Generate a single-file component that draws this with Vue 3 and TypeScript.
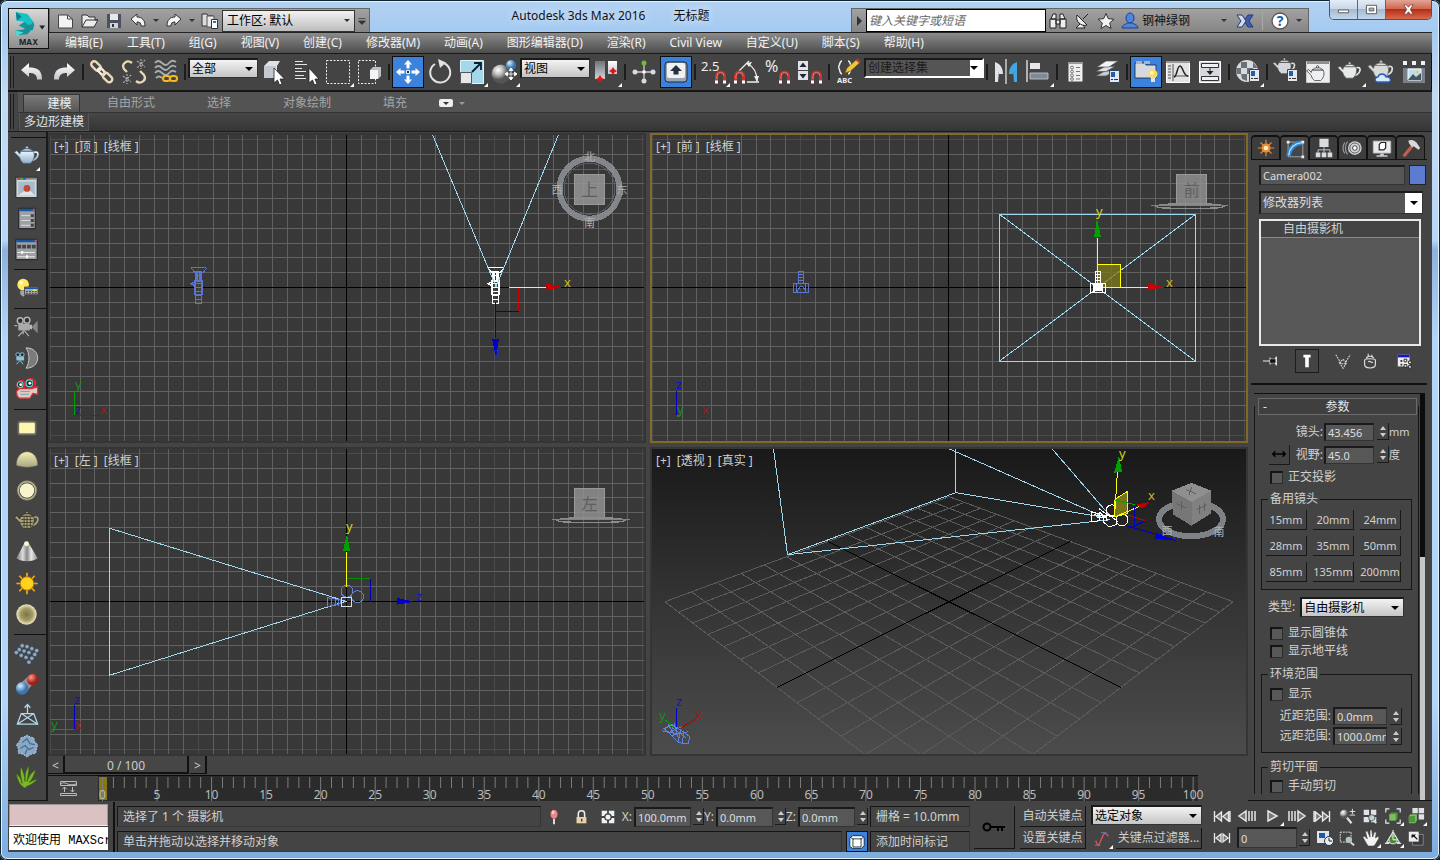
<script setup lang="ts">
import { ref } from 'vue'

type ToolItem = { kind: 'icon' | 'sep' | 'select' | 'combo'; icon?: string; label?: string; active?: boolean; fly?: boolean; options?: string[] }

const teapot = (fill: string, line = '#222'): string =>
  `<g fill="${fill}" stroke="${line}" stroke-width=".8"><path fill="none" stroke="${fill}" stroke-width="1.8" d="M22.500 12c7-3 6 6-1 8"/><path d="M9.500 10.500h13c2 4 1 9-3 12.500h-7c-2-1.500-3.500-3.500-4-6L3 11.500l2.500-1.500L8.500 13.500z"/><path d="M10 10.500c2-3.500 10-3.500 12 0z"/><circle cx="16" cy="6.800" r="1.300"/></g>`
const magnet = (x: number, y: number): string =>
  `<g transform="translate(${x} ${y})"><path d="M1.500 10V5a4 4 0 0 1 8 0v5" fill="none" stroke="#c5352f" stroke-width="3"/><path d="M2 8V5a3.500 3.500 0 0 1 7 0" fill="none" stroke="#ee8a80" stroke-width=".8"/><path d="M0 9.500h3v3H0zM8 9.500h3v3H8z" fill="#fff"/></g>`
const dialog = (x: number, y: number): string =>
  `<g transform="translate(${x} ${y})"><path d="M.5.5h10v12H.5z" fill="#e4e7ee" stroke="#34445e"/><path d="M2 2h4v5H2z" fill="#1d5fa8"/><path d="M2 9.500h2M5 9.500h4" stroke="#333"/></g>`

const icons: Record<string, string> = {
  undo: '<path d="M5 14l8-7v4.500c8 0 13 2 13 12h-5c0-5-3-6.500-8-6.500v4z" fill="url(#silver)"/>',
  redo: '<path d="M27 14l-8-7v4.500c-8 0-13 2-13 12h5c0-5 3-6.500 8-6.500v4z" fill="url(#silver)"/>',
  link: '<g fill="none" stroke="#ead9b5" stroke-width="2.400"><rect x="-5.500" y="-3" width="11" height="6" rx="3" transform="translate(10 10) rotate(45)"/><rect x="-4" y="-2" width="8" height="4" rx="2" transform="translate(15.500 15.500) rotate(45)" stroke="#f5ede0"/><rect x="-5.500" y="-3" width="11" height="6" rx="3" transform="translate(21.500 21.500) rotate(45)"/></g>',
  unlink: '<g fill="none" stroke="#ead9b5" stroke-width="2.300"><path d="M14 7c-5-4-11 1-8 6l3 3M18 25c5 4 11-1 8-6l-4-4"/></g><g stroke="#aaa" stroke-dasharray="2 1" stroke-width="1.200"><path d="M19 5l8 6M27 4l-8 8M23 3v10M5 20l8 6M13 19l-8 8M9 18v10"/></g>',
  bind: '<g fill="none" stroke="#a9adb0" stroke-width="1.800"><path d="M5 7q3-4 7 0t7 0t7-1M5 12q3-4 7 0t7 0t7-1M5 17q3-4 7 0t7 0t7-1"/><path d="M6 22q3-3 6 0"/></g><g fill="none" stroke="#f5b91b" stroke-width="2"><rect x="13" y="20" width="7" height="5" rx="2.500"/><rect x="20" y="20" width="7" height="5" rx="2.500"/></g>',
  pick: '<path d="M6 10l5-5h11l-3 5v12H6z" fill="#dfe2e8"/><path d="M6 10h12v12H6z" fill="#c4c8d0"/><path d="M16 12v15l3.500-3 2 5 2.500-1-2-5h4.500z" fill="#fff" stroke="#222" stroke-width=".8"/>',
  pickList: '<path d="M5 5.500h8M5 8.500h12M5 12.500h7M5 15.500h11M5 19.500h9M5 22.500h11" stroke="#e6e6e6" stroke-width="1.200"/><path d="M19 12v15l3.500-3 2 5 2.500-1-2-5h4z" fill="#fff" stroke="#222" stroke-width=".8"/>',
  region: '<path d="M4.500 4.500h23v23h-23z" fill="none" stroke="#eee" stroke-dasharray="2 1.500"/>',
  windowed: '<path d="M4.500 4.500h17v23h-17z" fill="none" stroke="#eee" stroke-dasharray="2 1.500"/><path d="M16 14l3-3h8v9l-3 3h-8z" fill="#bcc0c8"/><path d="M16 14h8v9h-8z" fill="#f4f4f6"/>',
  move: '<path d="M16 4l4 4.500h-2.500v4h-3v-4H12zM16 28l4-4.500h-2.500v-4h-3v4H12zM4 16l4.500-4v2.500h4v3h-4V20zM28 16l-4.500-4v2.500h-4v3h4V20z" fill="#fff"/><path d="M14.500 14.500h3v3h-3z" fill="#123" stroke="#fff"/>',
  rotate: '<path d="M11 8a10 10 0 1 0 9.500-.5" fill="none" stroke="#e3e3e3" stroke-width="2"/><path d="M14 3l8 3.500-6 5.500z" fill="#e3e3e3"/>',
  scale: '<path d="M4.500 4.500h23v23h-23z" fill="#a5d7ec" stroke="#dff3fa"/><path d="M4.500 16.500h11v11h-11z" fill="#e7e7ea" stroke="#555"/><path d="M16 16l8-8M18 7h7v7" fill="none" stroke="#0b1d29" stroke-width="1.800"/>',
  place: '<circle cx="13" cy="18" r="9.500" fill="url(#ball)"/><circle cx="23" cy="9" r="5" fill="url(#blueBall)"/><path d="M23 12v12M17 18h12M23 12l-2 2.500h4zM23 24l-2-2.500h4zM17 18l2.500-2v4zM29 18l-2.500-2v4z" fill="#fff" stroke="#fff" stroke-width=".8"/>',
  pivot: '<path d="M5 5h10v18H5z" fill="url(#steel)"/><path d="M18 5h9v13h-9z" fill="url(#silver)"/><path d="M10 19l1.500 2.500L14 23l-2.500 1.500L10 27l-1.500-2.500L6 23l2.500-1.500zM23 11l1.500 2.500L27 15l-2.500 1.500L23 19l-1.500-2.500L19 15l2.500-1.500z" fill="#e01616"/>',
  manipulate: '<path d="M16 8v16M7 16h18" stroke="#ccc" stroke-width="1.300"/><circle cx="16" cy="7" r="2.500" fill="#75b93c"/><circle cx="16" cy="25" r="2.500" fill="#d8dce2"/><circle cx="7" cy="16" r="2.500" fill="#d8dce2"/><circle cx="25" cy="16" r="2.500" fill="#d8dce2"/><path d="M14.500 14.500h3v3h-3z" fill="#fff"/>',
  keyboard: '<rect x="5" y="6" width="22" height="20" rx="3" fill="#9aa5b4" stroke="#18283d"/><rect x="7" y="7" width="18" height="15" rx="2" fill="#f1f1f1"/><path d="M16 9l6 6h-3.500v3.500h-5V15H10z" fill="#26313f"/>',
  snap: `<text x="3" y="15" font-size="13" font-family="Noto Sans, sans-serif" fill="#eee">2.5</text>${magnet(17, 15)}`,
  angle: `<path d="M9 15L19 5M17 26h12M18 8c6 3 9 9 9 17" fill="none" stroke="#eee" stroke-width="1.300"/><path d="M16 7l6-1-3 5zM24 20l3 6 2-6z" fill="#eee"/>${magnet(4, 15)}`,
  percent: `<text x="3" y="16" font-size="16" font-family="Noto Sans, sans-serif" fill="#eee">%</text>${magnet(17, 15)}`,
  spinner: `<path d="M4 5h10v9H4zM4 15h10v9H4z" fill="#dfe3ea"/><path d="M5.500 11L9 6.500l3.500 4.500zM5.500 18L9 22.500l3.500-4.500z" fill="#223"/>${magnet(17, 15)}`,
  sets: '<path d="M10 5c-3 0-2 6-4 6 2 0 1 7 4 7M16 5c3 0 2 6 4 6-2 0-1 7-4 7" fill="none" stroke="#eee" stroke-width="1.500"/><path d="M13 17l2-5 9-8 3.500 3-9 8z" fill="#f2c63c" stroke="#7a5a10" stroke-width=".7"/><path d="M24 4l3.500 3 1-1.500-3-3z" fill="#c33"/><text x="5" y="27" font-size="7.500" font-weight="bold" font-family="Noto Sans, sans-serif" fill="#eee">ABC</text>',
  mirror: '<path d="M5 6c6 2 8 7 8 12h-4v-3l-1 11H5z" fill="#dfe2e6"/><path d="M16 3v25" stroke="#eee" stroke-width="1.200"/><path d="M27 6c-6 2-8 7-8 12h4v-3l1 11h3z" fill="#42a6e0"/>',
  align: '<path d="M5 4v22" stroke="#eee" stroke-width="1.300"/><path d="M8 7h10v6H8z" fill="#e6e7ea"/><path d="M8 17h18v6H8z" fill="#7f8896" stroke="#c9ced8" stroke-width=".8"/>',
  layer: '<path d="M8.500 6.500h14v19h-14z" fill="#eee"/><path d="M8 6h15v2H8z" fill="#999"/><g fill="none" stroke="#777"><circle cx="12" cy="11.500" r="1.400"/><circle cx="12" cy="15.500" r="1.400"/><circle cx="12" cy="19.500" r="1.400"/><circle cx="12" cy="23" r="1.400"/><path d="M16 11.500h4M16 15.500h4M16 19.500h4M16 23h4"/></g>',
  layers: `<path d="M4 20l9-5h10l-9 5z" fill="#c8ccd2" stroke="#555" stroke-width=".7"/><path d="M4 15.500l9-5h10l-9 5z" fill="#dde0e5" stroke="#555" stroke-width=".7"/><path d="M5 11l9-6h12l-9 6z" fill="#f3f4f6" stroke="#555" stroke-width=".7"/>${dialog(17, 14)}`,
  ribbon: '<path d="M5 7h10l1 2h10v13H5z" fill="#d5d9df" stroke="#222" stroke-width=".8"/><path d="M6 5h6v3H6zM14 5h6v3h-6z" fill="#acb3bf"/><circle cx="23" cy="18" r="4.500" fill="#ffd85e"/><circle cx="22" cy="17" r="2" fill="#fff6c6"/><path d="M21 22h4v4h-4z" fill="#e2e2e2"/>',
  curves: '<path d="M4.500 5.500h23v21h-23z" fill="#e3e3e3" stroke="#fff"/><path d="M4 5h24v2H4z" fill="#999"/><path d="M6 10h3M6 13h3M6 16h3M6 19h3M6 22h3M11 8v17M11 20h16" stroke="#555"/><path d="M12 21c3 0 3-11 6-11s3 10 8 10" fill="none" stroke="#222" stroke-width="1.500"/>',
  schematic: '<path d="M5.500 5.500h21v21h-21z" fill="#d5d8de" stroke="#fff"/><path d="M7.500 7.500h17v4h-17zM7.500 20.500h17v4h-17z" fill="#eef0f3" stroke="#333"/><path d="M16 12v6" stroke="#222"/><path d="M12.500 15l3.500 4 3.500-4z" fill="#222"/>',
  material: `<circle cx="15" cy="15" r="11" fill="#d7dade"/><path d="M9 6h6v6H9zM15 12h6v6h-6zM21 6l4 5v1h-4zM9 18h6v7l-5-2zM4 12h5v6H4.500z" fill="#6c7178"/>${dialog(17, 13)}`,
  renderSetup: `<g transform="translate(0 -3) scale(.9)">${teapot('#d3d6da', '#444')}</g>${dialog(17, 13)}`,
  renderFrame: `<path d="M4.500 5.500h23v21h-23z" fill="#ecedef" stroke="#ccc"/><path d="M5 5h22v3H5z" fill="#8d9094"/><g transform="translate(2 5) scale(.85)">${teapot('#eff0f1', '#222')}</g>`,
  render: `<g transform="translate(1 1) scale(.92)">${teapot('#e6e8ea', '#555')}</g>`,
  cloud: `<g transform="translate(-1 -1)">${teapot('#dcdad6', '#777')}</g><path d="M11 26c-3-1-2-5 1-5 1-4 7-4 8 0 4-1 6 4 3 5z" fill="#dbe9fb" stroke="#2460c8" stroke-width="1.300"/>`,
  gallery: '<path d="M5 5h4v4H5zM14 5h4v4h-4zM23 5h4v4h-4z" fill="#f1f1f1"/><path d="M5 12h22v15H5z" fill="#78808b"/><path d="M10 13h13v11H10z" fill="#b9def2" stroke="#fff"/><path d="M10 24l5-6 3 3 5-4v7z" fill="#44565b"/><circle cx="19" cy="16" r="1.500" fill="#f7c945"/>',

  potBlue: teapot('url(#bluePot)', '#546b80'),
  frameBuf: '<path d="M4.500 5.500h22v21h-22z" fill="#cfd5db" stroke="#222"/><path d="M5 6h21v2H5z" fill="#888"/><path d="M6 6h3v2H6z" fill="#d33"/><path d="M9 6h3v2H9z" fill="#3a3"/><path d="M12 6h3v2h-3z" fill="#35d"/><path d="M7 10h17v14H7z" fill="#a9bacb"/><path d="M7 24l7-5h5l5 5z" fill="#e2e5e9"/><circle cx="16" cy="17" r="3.500" fill="#bd4a35"/>',
  panelA: '<path d="M7.500 5.500h17v21h-17z" fill="#9da1a6" stroke="#1b1b1b"/><path d="M8 6h16v2.500H8z" fill="#1557a6"/><path d="M10 13h9M10 18h9M10 23h9" stroke="#ddd"/><path d="M20 11.500h3v3h-3zM20 16.500h3v3h-3zM20 21.500h3v3h-3z" fill="#444"/><path d="M22 6h2v2h-2z" fill="#e44"/>',
  panelB: '<path d="M4.500 5.500h22v21h-22z" fill="#9da1a6" stroke="#1b1b1b"/><path d="M5 6h21v2.500H5z" fill="#1557a6"/><path d="M6 11h4v4H6zM11 11h4v4h-4zM16 11h4v4h-4zM21 11h4v4h-4z" fill="#444"/><path d="M6 19h18M6 23.500h18" stroke="#eee"/><path d="M10 17.500h2v3h-2zM15 22h2v3h-2z" fill="#fff"/><path d="M24 6h2v2h-2z" fill="#e44"/>',
  bulb: '<circle cx="12" cy="12" r="6" fill="#ffe95e"/><circle cx="10" cy="10" r="2" fill="#fffbd0"/><path d="M9 18h6v4l-3 2.500L9 22z" fill="#a4a4a4"/><path d="M13.500 14.500h14v8h-14z" fill="#a6abae" stroke="#444"/><path d="M14 15h13v1.500H14z" fill="#1557a6"/><path d="M15 19h11M15 21h11" stroke="#444" stroke-dasharray="2 1"/><path d="M22 17h4v1.500h-4z" fill="#fbe34b"/>',
  camGray: '<g fill="#2e2e2e" stroke="#b4b4b4" stroke-width="1.500"><circle cx="9" cy="9" r="3"/><circle cx="16" cy="8.500" r="3"/></g><path d="M7 12h12v7H7z" fill="#aaa"/><path d="M19 14l2-1v5l-2-1z" fill="#ccc"/><path d="M21 15l6-6v13l-6-6z" fill="#858585"/><path d="M13 19l-6 6M13 19l5 6M12 19v4M6 14l-3 0" stroke="#aaa" stroke-width="1.300"/>',
  camDome: '<path d="M15 5c16 0 16 21 0 21 4-6 4-15 0-21z" fill="#7b7b7b" stroke="#c8c8c8"/><g fill="#1e2a30" stroke="#8ec5dd"><circle cx="6.500" cy="12" r="2"/><circle cx="11" cy="12" r="2"/></g><path d="M5 14h8v4H5z" fill="#8ec5dd"/><path d="M9 18l-4 4M9 18l3 4" stroke="#8ec5dd"/>',
  camStereo: '<g stroke="#e0252b" stroke-width="2.200" fill="#2b2b2b"><circle cx="10" cy="11" r="4"/><circle cx="20" cy="9.500" r="4.500"/></g><g stroke="#58d3d3" stroke-width="1.200" fill="#1d2a2a"><circle cx="9" cy="11" r="3"/><circle cx="18.500" cy="9.500" r="3.500"/></g><g fill="#fff"><circle cx="9.500" cy="11" r="1.500"/><circle cx="19" cy="9.500" r="1.500"/></g><path d="M5 18l3-3h13l6-2v8l-5-1-3 5H8l-2-2z" fill="#e7c6c4" stroke="#c8383b" stroke-width="1.300"/><path d="M9 18h10M9 21h9" stroke="#5fb0b4"/>',
  vrayRect: '<rect x="6" y="8" width="20" height="15" rx="3" fill="#6e6a4d"/><path d="M8.500 10.500h15v10h-15z" fill="#fdf6ad" stroke="#fffde0"/>',
  dome: '<path d="M5 22c0-9 5-14 11-14s11 5 11 14c-6 2.500-16 2.500-22 0z" fill="url(#cream)" stroke="#6e6b55" stroke-width=".6"/>',
  sphere: '<circle cx="16" cy="16" r="10.500" fill="#77745c"/><circle cx="16" cy="16" r="9" fill="#383838" stroke="#bbb694" stroke-width="1.500"/><circle cx="16" cy="16" r="7.500" fill="#f6f4cc"/>',
  mesh: `${teapot('#aaa47e', '#2d2b1f')}<path d="M10 14h12M9 17h13M11 20h10M13 11v11M16 10v13M19.500 11v11" stroke="#36321f" stroke-width=".8"/>`,
  cone: '<path d="M13.500 6h4L27 22c-5 4-17 4-22 0z" fill="url(#coneGrad)"/><circle cx="15.500" cy="7" r="2.500" fill="#fff9cc"/>',
  sun: '<path d="M16 5v22M5 16h22M8 8l16 16M24 8L8 24" stroke="#f0a814" stroke-width="1.800"/><circle cx="16" cy="16" r="7" fill="#ffd21e" stroke="#b67408"/>',
  disc: '<circle cx="15.500" cy="16" r="10.500" fill="url(#discGrad)"/>',
  lattice: '<g fill="#8da9c4" stroke="#2d3d4c" stroke-width=".5"><circle cx="11" cy="8" r="2.200"/><circle cx="16" cy="9" r="2.200"/><circle cx="21" cy="11" r="2.200"/><circle cx="26" cy="13" r="2.200"/><circle cx="8" cy="12" r="2.200"/><circle cx="13" cy="13.500" r="2.200"/><circle cx="18" cy="15" r="2.200"/><circle cx="24" cy="17" r="2.200"/><circle cx="5" cy="15" r="2.200"/><circle cx="10" cy="18" r="2.200"/><circle cx="15" cy="20" r="2.200"/><circle cx="21" cy="21" r="2.200"/><circle cx="18" cy="25" r="2.200"/></g>',
  blobs: '<path d="M9 15l9-8 6 6-8 10z" fill="#9b8b9c"/><circle cx="11" cy="20" r="6.500" fill="url(#blueBall)"/><circle cx="22" cy="11" r="6" fill="url(#redBall)"/>',
  pyramid: '<path d="M10 14h13l4 11H6zM10 14l17 11M23 14L6 25M16.500 14V5M13.500 8l3-3.500 3 3.500" fill="none" stroke="#b4d9ec" stroke-width="1.300"/>',
  rock: '<path d="M10 7l3-1 3-2 3 2 4 1 1 4 3 3-1 4-1 5-5 1-4 3-4-3-5-1v-5l-2-4 3-3z" fill="#89a9c9" stroke="#c2d5e8" stroke-dasharray="1.500 1.500"/><path d="M11 12l5-4 3 5 5 1M9 18l5-3 4 4 5-2M14 24l2-5" stroke="#4a6a8c" fill="none" stroke-width="1.300"/>',
  grass: '<path d="M14 27C8 24 6 18 5 12c4 3 5 6 6 10-1-6-3-12-1-17 2 5 4 10 4 15 0-6 0-11 4-16 0 6-1 11-2 16 2-5 4-9 9-12-2 6-4 11-7 13 3-1 5-3 9-3-4 3-7 6-11 7z" fill="#7db52c" stroke="#38600f" stroke-width=".7"/>',
}

const tab: Record<string, string> = {
  create: '<path d="M12 3v18M3 12h18M6 6l12 12M18 6L6 18" stroke="#e2863a" stroke-width="1.300"/><circle cx="12" cy="12" r="5" fill="#f08a2c"/><circle cx="12" cy="12" r="2.500" fill="#fff6c8"/>',
  modify: '<path d="M4.500 4.500h16v16h-16z" fill="none" stroke="#aaa"/><path d="M5 20C6 11 11 6 20 5" fill="none" stroke="#2f89d4" stroke-width="5"/><path d="M5 19C6 11 11 6 19 5" fill="none" stroke="#b9defa" stroke-width="1.400"/><path d="M3 3h3v3H3zM19 3h3v3h-3zM19 19h3v3h-3z" fill="#eee"/>',
  hierarchy: '<path d="M7 2h10v9H7zM3 17h5v5H3zM9.500 17h5v5h-5zM16 17h5v5h-5z" fill="#d8dbe0"/><path d="M12 11v6M5.500 17v-3h13v3" fill="none" stroke="#ccc"/>',
  motion: '<circle cx="14" cy="12" r="7.500" fill="#d2d5d9"/><circle cx="14" cy="12" r="5.500" fill="none" stroke="#555"/><circle cx="14" cy="12" r="2.500" fill="#fff" stroke="#333"/><path d="M6 5c-3 4-3 10 0 14M3 6c-2.500 4-2.500 8 0 12" fill="none" stroke="#999" stroke-width="1.300"/>',
  display: '<path d="M2.500 4.500h19v13h-19z" fill="#e8e9ec" stroke="#bbb"/><path d="M9 8l2-2h5v6l-2 2H9z" fill="#fff" stroke="#222" stroke-width="1.300"/><path d="M10 18h4v2h4v1.500H6V20h4z" fill="#ccc"/>',
  utilities: '<path d="M4 21L14 9" stroke="#c05f4e" stroke-width="3.500"/><path d="M9 4c4-2 7 0 9 2l4 6-2 2-5-4-2 1-3-4z" fill="#d5d8dc"/>',
}

const small: Record<string, string> = {
  pin: '<path d="M1 10h8M9 6v8M15 6v8M9 8h6M9 12h6M9 10h6M16 5v10" stroke="#e8e8e8" stroke-width="1.200"/><path d="M9 8h6v4H9z" fill="#111"/>',
  showEnd: '<path d="M6 3h8v3h-2v11H8V6H6z" fill="#fff"/>',
  unique: '<path d="M2 3l6 10h4l6-10M6 12l4 6 4-6-4-4z" fill="none" stroke="#ddd" stroke-width="1.200" stroke-dasharray="2 1"/>',
  remove: '<path d="M4 9c0-2 12-2 12 0v5c0 5-12 5-12 0zM6 7c1-3 7-3 8 0M8 5V2M12 5V3M8 11c2-2 4 2 5 0" fill="none" stroke="#ddd" stroke-width="1.300"/>',
  config: '<path d="M2 3h13v13H2z" fill="#eee"/><path d="M2 3h13v3H2z" fill="#1616d0"/><path d="M5 9h2v2H5zM5 13h2v2H5z" fill="#333"/><path d="M9 8h3v3H9zM14 10h3v3h-3zM9 14h3v3H9zM14 15h3v3h-3z" fill="#e8e8e8" stroke="#222"/>',
  bulbPin: '<ellipse cx="10" cy="7" rx="4.500" ry="5.500" fill="#e2888e" stroke="#5e2b2f"/><ellipse cx="9" cy="5" rx="1.500" ry="2" fill="#ffd0cc"/><path d="M9 12h2v6H9z" fill="#eee"/>',
  lock: '<path d="M7 10V6c0-4 7-4 7 0v4" fill="none" stroke="#eee" stroke-width="1.700"/><path d="M5 10h11v7H5z" fill="#e7d2a7"/><path d="M10 12h1.500v3H10z" fill="#333"/>',
  absolute: '<path d="M3 3h6v6H3zM11 3h6v6h-6zM3 11h6v6H3zM11 11h6v6h-6z" fill="#eef1f5"/><circle cx="10" cy="10" r="3.500" fill="#eef1f5" stroke="#333" stroke-width="1.300"/>',
  cube: '<path d="M5 3h10l3 2v9l-3 3H5l-3-2V6z" fill="#fff" stroke="#123"/><path d="M5.500 6.500h9v9h-9z" fill="none" stroke="#234"/><path d="M3 5l3 2M17 5l-3 2" stroke="#234"/>',
  key: '<circle cx="6" cy="10" r="3.500" fill="none" stroke="#000" stroke-width="2"/><path d="M9 9h15v2h-2v3h-2v-3h-2v3h-2v-3H9z" fill="#000"/>',
  curve: '<path d="M3 12c3 8 4 4 6-1s4-11 8-4" fill="none" stroke="#e05252" stroke-width="1.500"/><path d="M9 3h6M2 17h6" stroke="#6884d8"/>',
  first: '<path d="M2.500 5v11M9.500 6L4 10.500 9.500 15zM16.500 6L11 10.500l5.500 4.500zM18 5v11" fill="#777" stroke="#e6e6e6" stroke-width="1.400"/>',
  prev: '<path d="M9 5L2 10l7 5zM12 5v10M15 5v10M18 5v10" fill="#777" stroke="#e6e6e6" stroke-width="1.500"/>',
  play: '<path d="M6 5l9 5-9 5z" fill="#777" stroke="#e6e6e6" stroke-width="1.500"/>',
  next: '<path d="M11 5l7 5-7 5zM8 5v10M5 5v10M2 5v10" fill="#777" stroke="#e6e6e6" stroke-width="1.500"/>',
  last: '<path d="M17.500 5v11M10.500 6l5.500 4.500L10.500 15zM3.500 6L9 10.500 3.500 15zM2 5v11" fill="#777" stroke="#e6e6e6" stroke-width="1.400"/>',
  keyMode: '<path d="M2.500 5v10M17.500 5v10M9 6l-5 4 5 4zM11 6l5 4-5 4z" fill="#777" stroke="#e6e6e6" stroke-width="1.300"/>',
  zoom: '<circle cx="7" cy="8" r="5" fill="url(#ball)"/><path d="M10 12l5 6" stroke="#ddd" stroke-width="2.500"/><path d="M13 5h6M16 2v6M13 9h6" stroke="#eee"/>',
  zoomAll: '<path d="M3 3h6v6H3zM11 3h6v6h-6zM3 11h6v6H3zM11 11h6v6h-6z" fill="#dfe2e6"/><circle cx="12" cy="12" r="3.500" fill="#bcd0da" stroke="#555"/><path d="M14 15l3 3" stroke="#ddd" stroke-width="2"/>',
  extents: '<path d="M2 6V2h4M14 2h4v4M2 14v4h4M14 18h4v-4" fill="none" stroke="#eee" stroke-width="1.300"/><path d="M6 8l2-2h7v7l-2 2H6z" fill="#4f963d"/><path d="M6 8h7v7H6z" fill="#7dbc62"/>',
  extentsAll: '<path d="M6 1h6v6H6zM13 1h6v6h-6zM13 8h6v6h-6z" fill="#dfe2e6"/><path d="M2 10l2-2h7v7l-2 3H2z" fill="#7dbc62"/><path d="M2 10h7v7H2z" fill="#4f963d"/>',
  timeCfg: '<path d="M2 3h12v12H2z" fill="#dfe3ea"/><path d="M4 5h6v5H4z" fill="#1a5ca8"/><circle cx="14" cy="13" r="4.500" fill="#eee" stroke="#234"/><path d="M14 10v3h3" fill="none" stroke="#222"/>',
  zoomRegion: '<path d="M2.500 3.500h12v11h-12z" fill="none" stroke="#eee" stroke-dasharray="2 1"/><circle cx="12" cy="12" r="3.500" fill="#b3c5bd"/><path d="M14 15l4 3" stroke="#ddd" stroke-width="2"/>',
  pan: '<path d="M6 16L2 9l2-1 3 3-2-8 2-1 3 7V1l2 0 1 8 2-6 2 1-1 6 3-2 1 2-4 7-2 2H8z" fill="#f3f3f3" stroke="#444" stroke-width=".7"/>',
  orbit: '<path d="M10 3L3 15h14zM10 1v6M1 16h5M14 16h5" fill="none" stroke="#ddd" stroke-width="1.300"/><circle cx="10" cy="12" r="4.500" fill="#4b8b35" stroke="#eee"/><path d="M10 8v4h4" fill="none" stroke="#fff"/>',
  maximize: '<path d="M6 6h12v12H6z" fill="#3a3a3a" stroke="#889"/><path d="M2 3h11v11H2z" fill="#eee"/><path d="M5 6h5L8.500 7.500 12 11l-1 1-3.500-3.500L5 10z" fill="#111"/>',
}

const quick: Record<string, string> = {
  file: '<path d="M2.500 4h9l5 4v9h-14z" fill="#f3f3f3" stroke="#444"/><path d="M11.500 4v4h5" fill="none" stroke="#444"/>',
  open: '<path d="M2 16V4h5l2 2h6v3h3l-4 7z" fill="#ececec" stroke="#333"/><path d="M2 16l4-7h12" fill="none" stroke="#333"/>',
  save: '<path d="M3 3h14v14H3z" fill="#4a5060"/><path d="M6 3h8v6H6z" fill="#e6e8ec"/><path d="M6 12h8v5H6z" fill="#cfd3da"/><path d="M8 13h2v3H8z" fill="#333"/>',
  undo: '<path d="M3 8l6-5v3c5 0 8 3 8 9h-4c0-3-1-4-4-4v3z" fill="#f4f4f4" stroke="#333"/>',
  redo: '<path d="M17 8l-6-5v3c-5 0-8 3-8 9h4c0-3 1-4 4-4v3z" fill="#f4f4f4" stroke="#333"/>',
  project: '<path d="M2 3h5l1 2h5v10H2z" fill="#ddd" stroke="#333"/><path d="M7 5h7v11H7z" fill="#e9e9e9" stroke="#555"/><path d="M11.500 8.500h6v9h-6z" fill="#fff" stroke="#333"/><path d="M13 10h3v2h-3z" fill="#27c"/>',
  find: '<path d="M3 8l2-5h3v5zM12 8V3h3l2 5zM2 8h6v9H2zM12 8h6v9h-6zM8 9h4v4H8z" fill="#eee" stroke="#222"/>',
  dish: '<path d="M5 4c-2 6 4 12 10 10zM11 8l5-5M8 13l-4 4h9l-2-3" fill="#eee" stroke="#222"/>',
  star: '<path d="M10 2.500l2.300 5.200 5.700.5-4.300 3.700 1.300 5.600-5-3-5 3 1.300-5.600L2 8.200l5.700-.5z" fill="#f2f2f2" stroke="#333"/>',
  user: '<ellipse cx="10" cy="7" rx="4" ry="5" fill="#4e86dd" stroke="#1c3f8c"/><path d="M2 17c0-3 4-4 6-5h4c2 1 6 2 6 5z" fill="#4e86dd" stroke="#1c3f8c"/>',
  exchange: '<path d="M18 4h-5L9 10l4 6h5l-4-6z" fill="#3f5fae" stroke="#223a7a"/><path d="M2 4h5l4 6-4 6H2l4-6z" fill="#d6dbe8" stroke="#223a7a"/>',
  help: '<circle cx="10" cy="10" r="8" fill="#fff" stroke="#555" stroke-width="1.300"/><text x="10" y="15" text-anchor="middle" font-size="14" font-weight="bold" font-family="Noto Sans, sans-serif" fill="#1b5da9">?</text>',
}

const tools: ToolItem[] = [
  { kind: 'icon', icon: 'undo', label: '撤消' }, { kind: 'icon', icon: 'redo', label: '重做' }, { kind: 'sep' },
  { kind: 'icon', icon: 'link', label: '选择并链接' }, { kind: 'icon', icon: 'unlink', label: '断开链接' }, { kind: 'icon', icon: 'bind', label: '绑定到空间扭曲' }, { kind: 'sep' },
  { kind: 'select', label: '选择过滤器', options: ['全部'] },
  { kind: 'icon', icon: 'pick', label: '选择对象' }, { kind: 'icon', icon: 'pickList', label: '按名称选择' }, { kind: 'icon', icon: 'region', label: '选择区域', fly: true }, { kind: 'icon', icon: 'windowed', label: '窗口/交叉' }, { kind: 'sep' },
  { kind: 'icon', icon: 'move', label: '选择并移动', active: true }, { kind: 'icon', icon: 'rotate', label: '选择并旋转' }, { kind: 'icon', icon: 'scale', label: '选择并缩放', fly: true }, { kind: 'icon', icon: 'place', label: '选择并放置', fly: true },
  { kind: 'select', label: '参考坐标系', options: ['视图'] },
  { kind: 'icon', icon: 'pivot', label: '使用轴点中心', fly: true }, { kind: 'sep' },
  { kind: 'icon', icon: 'manipulate', label: '选择并操纵' }, { kind: 'icon', icon: 'keyboard', label: '键盘快捷键覆盖', active: true }, { kind: 'sep' },
  { kind: 'icon', icon: 'snap', label: '捕捉开关', fly: true }, { kind: 'icon', icon: 'angle', label: '角度捕捉' }, { kind: 'icon', icon: 'percent', label: '百分比捕捉' }, { kind: 'icon', icon: 'spinner', label: '微调器捕捉' }, { kind: 'sep' },
  { kind: 'icon', icon: 'sets', label: '编辑命名选择集' }, { kind: 'combo', label: '命名选择集', options: ['创建选择集'] }, { kind: 'sep' },
  { kind: 'icon', icon: 'mirror', label: '镜像' }, { kind: 'icon', icon: 'align', label: '对齐', fly: true }, { kind: 'sep' },
  { kind: 'icon', icon: 'layer', label: '场景资源管理器' }, { kind: 'icon', icon: 'layers', label: '层资源管理器' }, { kind: 'sep' },
  { kind: 'icon', icon: 'ribbon', label: '切换功能区', active: true }, { kind: 'icon', icon: 'curves', label: '曲线编辑器' }, { kind: 'icon', icon: 'schematic', label: '图解视图' }, { kind: 'sep' },
  { kind: 'icon', icon: 'material', label: '材质编辑器', fly: true }, { kind: 'sep' },
  { kind: 'icon', icon: 'renderSetup', label: '渲染设置' }, { kind: 'icon', icon: 'renderFrame', label: '渲染帧窗口' }, { kind: 'icon', icon: 'render', label: '渲染产品', fly: true }, { kind: 'icon', icon: 'cloud', label: '云渲染' }, { kind: 'icon', icon: 'gallery', label: '渲染库' },
]

const sideGroups: string[][] = [
  ['potBlue', 'frameBuf', 'panelA', 'panelB'], ['bulb'], ['camGray', 'camDome', 'camStereo'],
  ['vrayRect', 'dome', 'sphere', 'mesh', 'cone', 'sun', 'disc'], ['lattice', 'blobs', 'pyramid', 'rock', 'grass'],
]
const menus = ['编辑(E)', '工具(T)', '组(G)', '视图(V)', '创建(C)', '修改器(M)', '动画(A)', '图形编辑器(D)', '渲染(R)', 'Civil View', '自定义(U)', '脚本(S)', '帮助(H)']
const ribbonTabs = ['建模', '自由形式', '选择', '对象绘制', '填充']
const lensSizes = ['15mm', '20mm', '24mm', '28mm', '35mm', '50mm', '85mm', '135mm', '200mm']
const modButtons = ['pin', 'showEnd', 'unique', 'remove', 'config']

const CELL = 14.8
type Line = { x1: number; y1: number; x2: number; y2: number; tone: string }
function flatGrid(left: number, top: number, cx: number, cy: number): Line[] {
  const out: Line[] = []
  for (let k = -21; k <= 21; k++) {
    if (k === 0) continue
    const tone = k % 10 === 0 ? 'dim' : 'lit'
    const x = Math.round(cx + k * CELL) + 0.5
    const y = Math.round(cy + k * CELL) + 0.5
    out.push({ x1: x, y1: top, x2: x, y2: top + 306, tone })
    if (Math.abs(k) <= 10) out.push({ x1: left, y1: y, x2: left + 594, y2: y, tone })
  }
  out.sort((a, b) => a.tone.localeCompare(b.tone))
  out.push({ x1: cx + 0.5, y1: top, x2: cx + 0.5, y2: top + 306, tone: 'axis' })
  out.push({ x1: left, y1: cy + 0.5, x2: left + 594, y2: cy + 0.5, tone: 'axis' })
  return out
}
const topGrid = flatGrid(50, 135, 346, 287)
const frontGrid = flatGrid(652, 135, 948, 287)
const leftGrid = flatGrid(50, 449, 346, 601)

function project(u: number, v: number): [number, number] {
  const t = u + v
  const w = 1 + 0.0248 * t
  return [949 + (20.3 * (u - v)) / w, (602 + 4.82 * t) / w]
}
const floorLines: Line[] = []
for (const k of [-7, -6, -5, -4, -3, -2, -1, 1, 2, 3, 4, 5, 6, 7, 0]) {
  for (const [a, b] of [[project(k, -7), project(k, 7)], [project(-7, k), project(7, k)]]) {
    floorLines.push({ x1: a[0], y1: a[1], x2: b[0], y2: b[1], tone: k === 0 ? 'axis' : 'floor' })
  }
}

const frames = Array.from({ length: 101 }, (_, i) => i)
const framePos = (f: number): string => `${0.41 + f * 0.9915}%`

const objectName = ref('Camera002')
const lens = ref('43.456')
const fov = ref('45.0')
const near = ref('0.0mm')
const far = ref('1000.0mm')
const coords = ref([{ axis: 'X', value: '100.0mm' }, { axis: 'Y', value: '0.0mm' }, { axis: 'Z', value: '0.0mm' }])
const frame = ref('0')
const ortho = ref(false)
const showCone = ref(false)
const showHorizon = ref(false)
const showEnv = ref(false)
const clip = ref(false)
</script>

<template>
  <div class="window">
    <svg class="defs" aria-hidden="true">
      <defs>
        <linearGradient id="silver" x2="0" y2="1"><stop offset="0" stop-color="#fff" /><stop offset="1" stop-color="#c3c6cb" /></linearGradient>
        <linearGradient id="steel" x2="0" y2="1"><stop offset="0" stop-color="#70747c" /><stop offset="1" stop-color="#d0d3da" /></linearGradient>
        <linearGradient id="bluePot" x2="0" y2="1"><stop offset="0" stop-color="#f1f8ff" /><stop offset="1" stop-color="#8fb0cc" /></linearGradient>
        <linearGradient id="cream" x2="0" y2="1"><stop offset="0" stop-color="#f3f0b4" /><stop offset="1" stop-color="#a9a682" /></linearGradient>
        <linearGradient id="coneGrad"><stop offset="0" stop-color="#777" /><stop offset=".3" stop-color="#ddd" /><stop offset=".5" stop-color="#888" /><stop offset=".7" stop-color="#e8e8e8" /><stop offset="1" stop-color="#888" /></linearGradient>
        <radialGradient id="discGrad"><stop offset="0" stop-color="#7b7442" /><stop offset=".6" stop-color="#a49c68" /><stop offset="1" stop-color="#efe9bd" /></radialGradient>
        <radialGradient id="ball" cx=".35" cy=".3"><stop offset="0" stop-color="#fff" /><stop offset=".5" stop-color="#bbb" /><stop offset="1" stop-color="#555" /></radialGradient>
        <radialGradient id="blueBall" cx=".35" cy=".3"><stop offset="0" stop-color="#d7ecff" /><stop offset="1" stop-color="#3b75ad" /></radialGradient>
        <radialGradient id="redBall" cx=".35" cy=".3"><stop offset="0" stop-color="#ff9c8a" /><stop offset="1" stop-color="#9e2119" /></radialGradient>
        <linearGradient id="sky" x2="0" y2="1"><stop offset="0" stop-color="#191919" /><stop offset=".5" stop-color="#343434" /><stop offset="1" stop-color="#4c4c4c" /></linearGradient>
      </defs>
    </svg>

    <header class="titlebar">
      <button class="app-btn" aria-label="应用程序菜单">
        <svg viewBox="0 0 40 40" width="39" height="39">
          <path d="M7 3l12 2 6 8-4 4-5-4-8-1z" fill="#19c3c3" /><path d="M7 3l6 5-5 4z" fill="#0b8288" />
          <path d="M16 13l5 4 4-4 1 4-2 5-8-2-6-3z" fill="#0c9aa0" /><path d="M7 27l12-1 6-7-4-3-6 5-8 1z" fill="#149297" /><path d="M7 22l8 2-8 4z" fill="#4fd8d6" />
          <path d="M31 17h6l-3 4z" fill="#222" />
          <text x="20" y="37" text-anchor="middle" font-size="8" font-weight="bold" font-family="Inter, sans-serif" fill="#222">MAX</text>
        </svg>
      </button>
      <div class="quickbar">
        <button v-for="q in ['file', 'open', 'save']" :key="q" :aria-label="q"><svg viewBox="0 0 20 20" v-html="quick[q]" /></button>
        <button aria-label="撤消"><svg viewBox="0 0 20 20" v-html="quick.undo" /></button><i class="tri" />
        <button aria-label="重做"><svg viewBox="0 0 20 20" v-html="quick.redo" /></button><i class="tri" />
        <button aria-label="项目"><svg viewBox="0 0 20 20" v-html="quick.project" /></button>
        <span class="workspace"><select aria-label="工作区"><option>工作区: 默认</option></select></span>
        <button class="more" aria-label="自定义"><svg viewBox="0 0 20 20"><path d="M5 6.500h10M5 10h10l-5 5z" fill="#333" stroke="#333" /></svg></button>
      </div>
      <h1 class="title"><span>Autodesk 3ds Max 2016</span><span>无标题</span></h1>
      <div class="info">
        <button class="collapse" aria-label="折叠"><i class="tri-right" /></button>
        <input class="search" aria-label="搜索" placeholder="键入关键字或短语">
        <button v-for="q in ['find', 'dish', 'star', 'user']" :key="q" :aria-label="q"><svg viewBox="0 0 20 20" v-html="quick[q]" /></button>
        <span class="account">钢神绿钢</span><i class="tri" />
        <button aria-label="Exchange"><svg viewBox="0 0 20 20" v-html="quick.exchange" /></button>
        <i class="info-sep" />
        <button aria-label="帮助"><svg viewBox="0 0 20 20" v-html="quick.help" /></button><i class="tri" />
      </div>
      <div class="winbtns">
        <button aria-label="最小化"><svg viewBox="0 0 14 14"><path d="M1.500 7.500h11v3h-11z" fill="#fff" stroke="#555" /></svg></button>
        <button aria-label="最大化"><svg viewBox="0 0 14 14"><path d="M1.500 2.500h11v9h-11zM4.500 5.500h5v3h-5z" fill="#fff" fill-rule="evenodd" stroke="#555" /></svg></button>
        <button class="close" aria-label="关闭"><svg viewBox="0 0 14 14"><path d="M2 2h3l2 2.500L9 2h3L9 7l3 5H9L7 9.500 5 12H2l3-5z" fill="#fff" stroke="#633" stroke-width=".8" /></svg></button>
      </div>
    </header>

    <div class="client">
      <nav class="menubar"><button v-for="m in menus" :key="m">{{ m }}</button></nav>

      <div class="toolbar">
        <i class="grip" />
        <template v-for="(t, i) in tools" :key="i">
          <button v-if="t.kind === 'icon'" class="tool" :class="{ active: t.active, fly: t.fly }" :aria-label="t.label"><svg viewBox="0 0 32 32" v-html="icons[t.icon!]" /></button>
          <i v-else-if="t.kind === 'sep'" class="sep" />
          <span v-else class="drop" :class="t.kind"><select :aria-label="t.label"><option v-for="o in t.options" :key="o">{{ o }}</option></select></span>
        </template>
      </div>

      <div class="ribbon">
        <i class="grip" />
        <div class="ribbon-body">
          <div class="ribbon-tabs">
            <button v-for="(r, i) in ribbonTabs" :key="r" :class="{ on: i === 0 }">{{ r }}</button>
            <button class="mini" aria-label="最小化功能区"><i class="tri" /></button><i class="tri pale" />
          </div>
          <div class="ribbon-panel"><button>多边形建模</button></div>
        </div>
      </div>

      <main class="work">
        <aside class="side">
          <div v-for="(g, gi) in sideGroups" :key="gi" class="side-group">
            <button v-for="s in g" :key="s" :aria-label="s" :class="{ fly: s === 'potBlue' }"><svg viewBox="0 0 32 32" v-html="icons[s]" /></button>
          </div>
        </aside>

        <section class="center">
          <div class="views">
            <div class="view">
              <svg viewBox="50 135 594 306" preserveAspectRatio="xMidYMid slice">
                <line v-for="(l, i) in topGrid" :key="i" :x1="l.x1" :y1="l.y1" :x2="l.x2" :y2="l.y2" :class="l.tone" />
                <g v-for="c in [{ x: 198, s: '#5876cf' }, { x: 495, s: '#fff' }]" :key="c.x" :transform="`translate(${c.x} 0)`" :stroke="c.s" fill="none">
                  <path d="M-7 267.500h15M-7 268l4 5h8l4-5M-2.500 272v32h6v-32zM-4 280.500h8v14h-8zM-3 276h6M-3 284h7M-3 288h7M-3 292h7M-3 296h7M-3 300h7M-7 284l4-2v4z" />
                  <path d="M-1 272v9h3v-9" stroke-width="2" />
                </g>
                <path class="cone-line" d="M432.500 135L496 287M558.500 135L496 287" />
                <path d="M509 287.500h38" stroke="#ff0" /><path d="M546 283.500v7l16-3z" fill="#c40000" />
                <path d="M518.500 288v23" stroke="#c00" /><path d="M495.500 302v36M496 311.500h23" stroke="#0000b0" fill="none" /><path d="M492 339h7l-3 19z" fill="#0000c8" />
                <text x="564" y="287" class="ax" fill="#c8b81c">x</text><text x="494" y="357" class="ax" fill="#2030b0">z</text>
                <path d="M74.500 391v24" stroke="#00a000" /><path d="M75 415.500h25" stroke="#b00000" />
                <text x="75" y="389" class="ax" fill="#169016">y</text><text x="75" y="414" class="ax" fill="#1010c8">z</text><text x="100" y="414" class="ax" fill="#a01818">x</text>
                <g opacity=".85"><circle cx="589.500" cy="189" r="30" fill="none" stroke="#90949a" stroke-width="6" /><circle cx="589.500" cy="189" r="25.500" fill="none" stroke="#606266" />
                  <path d="M574.500 174.500h30v30h-30z" fill="#969696" stroke="#aaa" /><text x="589.500" y="196" text-anchor="middle" font-size="17" fill="#666">上</text></g>
                <g class="compass"><text x="589.500" y="161">北</text><text x="589.500" y="227">南</text><text x="557" y="194">西</text><text x="622" y="194">东</text></g>
              </svg>
              <div class="vlabel"><button>[+]</button><button>[顶 ]</button><button>[线框 ]</button></div>
            </div>

            <div class="view current">
              <svg viewBox="652 135 594 306" preserveAspectRatio="xMidYMid slice">
                <line v-for="(l, i) in frontGrid" :key="i" :x1="l.x1" :y1="l.y1" :x2="l.x2" :y2="l.y2" :class="l.tone" />
                <path class="cone-line" d="M999.500 214.500h196v147h-196zM1000 215l195 146M1195 215L1000 361" />
                <path d="M1097.500 264.500h23v23h-23z" fill="#7d7b18" fill-opacity=".75" stroke="#ff0" />
                <g v-for="c in [{ x: 801, s: '#5876cf' }, { x: 1098, s: '#fff' }]" :key="c.x" :transform="`translate(${c.x} 0)`" :stroke="c.s" fill="none">
                  <path d="M-2.500 271.500h5v12h-5zM-2 274.500h4M-2 277.500h4M-2 280.500h4M-7.500 283.500h15v9h-15zM-4.500 284v8M4.500 284v8M-4 292l3-5h3l3 5" /><path v-if="c.x === 1098" d="M-3.500 284h8v7h-8z" fill="#fff" />
                </g>
                <path d="M1097.500 238v33M1111 287.500h37" stroke="#ff0" /><path d="M1094 237l3-18 4 18z" fill="#00a000" /><path d="M1148 283.500v7l17-3z" fill="#d00000" />
                <text x="1096" y="216" class="ax" fill="#d4d41c">y</text><text x="1166" y="287" class="ax" fill="#c8b81c">x</text>
                <path d="M676.500 391v24" stroke="#0000c8" /><path d="M677 415.500h4" stroke="#00a000" />
                <text x="676" y="389" class="ax" fill="#1010c8">z</text><text x="677" y="414" class="ax" fill="#169016">y</text><text x="702" y="414" class="ax" fill="#a01818">x</text>
                <g opacity=".85"><path d="M1176.500 174.500h30v30h-30z" fill="#909090" stroke="#aaa" /><text x="1191.500" y="196" text-anchor="middle" font-size="16" fill="#666">前</text><ellipse cx="1190" cy="206.500" rx="34" ry="2.500" fill="none" stroke="#999ca0" stroke-width="1.500" /><path d="M1151 205.500h77" stroke="#8d8f92" /></g>
              </svg>
              <div class="vlabel"><button>[+]</button><button>[前 ]</button><button>[线框 ]</button></div>
            </div>

            <div class="view">
              <svg viewBox="50 449 594 306" preserveAspectRatio="xMidYMid slice">
                <line v-for="(l, i) in leftGrid" :key="i" :x1="l.x1" :y1="l.y1" :x2="l.x2" :y2="l.y2" :class="l.tone" />
                <path class="cone-line" d="M346 601.500L109.500 528.500v147z" />
                <g fill="none" stroke="#6080da"><circle cx="347" cy="591.500" r="6" /><circle cx="357.500" cy="597" r="6" /><path d="M327 598l13 2v4l-13 3zM331 599v8M335 600v6M338 598v8" /></g>
                <path d="M341.500 597.500h10v9h-10z" fill="none" stroke="#ddd" />
                <path d="M346.500 552v35" stroke="#ff0" /><path d="M343 551l4-17 3 17z" fill="#00a000" /><path d="M347 578.500h23" stroke="#009000" /><path d="M370.500 579v23" stroke="#0000b0" /><path d="M397 598v7l17-3z" fill="#0000c8" />
                <text x="346" y="531" class="ax" fill="#d4d41c">y</text><text x="416" y="601" class="ax" fill="#1818b8">z</text>
                <path d="M74.500 705v24" stroke="#0000c8" /><path d="M51 729.500h23" stroke="#00a000" />
                <text x="74" y="704" class="ax" fill="#1010c8">z</text><text x="51" y="729" class="ax" fill="#169016">y</text><text x="75" y="729" class="ax" fill="#a01818">x</text>
                <g opacity=".85"><path d="M574.500 488.500h30v30h-30z" fill="#909090" stroke="#aaa" /><text x="589.500" y="510" text-anchor="middle" font-size="16" fill="#666">左</text><ellipse cx="591" cy="520.500" rx="34" ry="2.500" fill="none" stroke="#999ca0" stroke-width="1.500" /><path d="M552 519.500h78" stroke="#8d8f92" /></g>
              </svg>
              <div class="vlabel"><button>[+]</button><button>[左 ]</button><button>[线框 ]</button></div>
            </div>

            <div class="view">
              <svg viewBox="652 449 594 306" preserveAspectRatio="xMidYMid slice">
                <path d="M652 449h594v306H652z" fill="url(#sky)" />
                <line v-for="(l, i) in floorLines" :key="i" :x1="l.x1" :y1="l.y1" :x2="l.x2" :y2="l.y2" :class="l.tone" />
                <path class="cone-line" d="M773.500 449l14 106 168-62v-44M787 555l323-35M956 493l145 24M949 449l152 67M1052 449l57 66" />
                <g fill="none" stroke="#fff"><circle cx="1112" cy="511" r="6" /><circle cx="1122" cy="520" r="6" /><path d="M1091 512l8 2v7l-8 1zM1099 509l7 5v7M1104 516h12v9l-7 2-6-5zM1108 514l10 8M1094 515l12 2M1099 512l9 8M1097 518h8" /></g>
                <path d="M1114 500l13-8v22l-13 3z" fill="#77751a" stroke="#ff0" /><path d="M1114.500 517l3-46M1115 517l24-10" stroke="#ff0" /><path d="M1114 473l5-17 3 16z" fill="#00a000" /><path d="M1136 505l14-3-8 7z" fill="#c00000" />
                <path d="M1114 500l21 5" stroke="#00a000" /><path d="M1134 505v22M1126 526l32 9M1133 527l12-6" stroke="#0000b8" fill="none" /><path d="M1127 515l18 6" stroke="#c00" /><path d="M1156 533l-1 6 22 2z" fill="#0000d0" />
                <text x="1119" y="458" class="ax" fill="#d4d41c">y</text><text x="1148" y="500" class="ax" fill="#c8b81c">x</text><text x="1173" y="540" class="ax" fill="#2020b0">z</text>
                <g opacity=".9"><ellipse cx="1191" cy="519.500" rx="32" ry="17" fill="#252525" stroke="#888b91" stroke-width="6" />
                  <path d="M1191.500 483l20 8-20 11-20-11z" fill="#9c9c9c" /><path d="M1171.500 491l20 11v24l-18-11z" fill="#808080" /><path d="M1211.500 491l-20 11v24l19-12z" fill="#8b8b8b" />
                  <path d="M1186 490l10 4M1192 487l-3 8M1177 504l9 4M1181 501v9M1197 510l9-5M1199 514v-9M1204 511v-8" stroke="#666" /></g>
                <g class="compass"><text x="1167" y="535">西</text><text x="1219" y="536">南</text></g>
                <path d="M676.500 708v22" stroke="#0000d0" /><path d="M677 730l18-10" stroke="#b00000" /><path d="M677 730l-12-10" stroke="#00a000" />
                <text x="676" y="706" class="ax" fill="#1515d0">z</text><text x="695" y="719" class="ax" fill="#a01818">x</text><text x="659" y="720" class="ax" fill="#169016">y</text>
                <path d="M664 729l8-4 10 6 8 6-2 7-9-1-6-6zM668 724l6 11M674 723l5 18M671 736l17-4M681 730l-3 13M662 731l16 3M672 728l14 10M670 732l12-5M684 733l-2 11" fill="none" stroke="#6080da" />
              </svg>
              <div class="vlabel"><button>[+]</button><button>[透视 ]</button><button>[真实 ]</button></div>
            </div>
          </div>

          <div class="slider-row"><button aria-label="上一帧">&lt;</button><button class="thumb">0 / 100</button><button aria-label="下一帧">&gt;</button></div>
          <div class="track">
            <button class="track-btn" aria-label="打开迷你曲线编辑器"><svg viewBox="0 0 20 20" width="20" height="20"><path d="M1.500 2.500h16v4h-16zM1.500 14.500h16v2h-16z" fill="none" stroke="#bbb" /><path d="M2 5c4-4 6 3 15 0M5.500 13V8M13.500 8v5M3.500 10l2-2 2 2M11.500 11l2 2 2-2" fill="none" stroke="#bbb" /></svg></button>
            <div class="ruler">
              <i class="marker" />
              <svg width="100%" height="26">
                <template v-for="f in frames" :key="f">
                  <line :x1="framePos(f)" :x2="framePos(f)" y1="1" :y2="f % 5 ? 12 : 25" stroke="#7d7d7d" />
                  <text v-if="f % 5 === 0" :x="framePos(f)" y="23" text-anchor="middle">{{ f }}</text>
                </template>
              </svg>
            </div>
          </div>
        </section>

        <aside class="panel">
          <div class="tabs"><button v-for="(svg, k) in tab" :key="k" :aria-label="String(k)" :class="{ on: k === 'modify' }"><svg viewBox="0 0 24 24" v-html="svg" /></button></div>
          <div class="name-row"><input v-model="objectName" class="field" aria-label="对象名称"><button class="swatch" aria-label="对象颜色" /></div>
          <span class="drop modlist"><select aria-label="修改器列表"><option>修改器列表</option></select></span>
          <ul class="stack"><li>自由摄影机</li></ul>
          <div class="mod-tools"><button v-for="m in modButtons" :key="m" :aria-label="m" :class="m"><svg viewBox="0 0 20 20" v-html="small[m]" /></button></div>
          <div class="rollout-wrap">
            <div class="rollout">
              <button class="roll-head"><span>-</span>参数</button>
              <div class="roll-body">
                <div class="param"><label for="lens">镜头:</label><input id="lens" v-model="lens" class="field"><i class="spin" /><span>mm</span></div>
                <div class="param"><button class="fov" aria-label="视野方向"><svg viewBox="0 0 20 20"><path d="M3 10h14M6 7l-3 3 3 3M14 7l3 3-3 3" fill="none" stroke="#000" stroke-width="1.500" /></svg></button><label for="fov">视野:</label><input id="fov" v-model="fov" class="field"><i class="spin" /><span>度</span></div>
                <label class="check ortho"><input v-model="ortho" type="checkbox">正交投影</label>
                <fieldset class="stock"><legend>备用镜头</legend><div class="lens-grid"><button v-for="l in lensSizes" :key="l">{{ l }}</button></div></fieldset>
                <div class="type-row"><label for="ctype">类型:</label><span class="drop"><select id="ctype"><option>自由摄影机</option></select></span></div>
                <label class="check tight"><input v-model="showCone" type="checkbox">显示圆锥体</label>
                <label class="check tight"><input v-model="showHorizon" type="checkbox">显示地平线</label>
                <fieldset class="env"><legend>环境范围</legend>
                  <label class="check"><input v-model="showEnv" type="checkbox">显示</label>
                  <div class="range"><label for="near">近距范围:</label><input id="near" v-model="near" class="field"><i class="spin" /></div>
                  <div class="range"><label for="far">远距范围:</label><input id="far" v-model="far" class="field"><i class="spin" /></div>
                </fieldset>
                <fieldset class="clipping"><legend>剪切平面</legend><label class="check"><input v-model="clip" type="checkbox">手动剪切</label></fieldset>
              </div>
            </div>
            <i class="scroll" />
          </div>
        </aside>
      </main>

      <footer class="status">
        <div class="listener"><div class="macro" /><input aria-label="侦听器" value="欢迎使用 MAXScript"></div>
        <div class="prompts">
          <div class="prow">
            <output class="sunk grow">选择了 1 个 摄影机</output>
            <button v-for="s in ['bulbPin', 'lock', 'absolute']" :key="s" class="si" :aria-label="s"><svg viewBox="0 0 20 20" v-html="small[s]" /></button>
            <template v-for="c in coords" :key="c.axis"><label class="coord">{{ c.axis }}:<input v-model="c.value" class="field"></label><i class="spin" /></template>
          </div>
          <div class="prow"><output class="sunk grow">单击并拖动以选择并移动对象</output><button class="cube" aria-label="自适应降级"><svg viewBox="0 0 20 20" v-html="small.cube" /></button></div>
        </div>
        <div class="gridinfo"><output class="sunk">栅格 = 10.0mm</output><button class="sunk">添加时间标记</button></div>
        <button class="keybtn" aria-label="设置关键点"><svg viewBox="0 0 26 20" width="26" height="20" v-html="small.key" /></button>
        <div class="keys"><button>自动关键点</button><button>设置关键点</button></div>
        <div class="filters">
          <span class="drop"><select aria-label="选定对象"><option>选定对象</option></select></span>
          <div class="frow"><button class="si fly" aria-label="切线"><svg viewBox="0 0 20 20" v-html="small.curve" /></button><button class="kf">关键点过滤器...</button></div>
        </div>
        <div class="playback">
          <div class="prow"><button v-for="s in ['first', 'prev', 'play', 'next', 'last']" :key="s" :class="['si', s, { fly: s === 'play' }]" :aria-label="s"><svg viewBox="0 0 20 20" v-html="small[s]" /></button></div>
          <div class="prow"><button class="si" aria-label="关键点模式"><svg viewBox="0 0 20 20" v-html="small.keyMode" /></button><input v-model="frame" class="field frame" aria-label="当前帧"><i class="spin" /><button class="si tcfg" aria-label="时间配置"><svg viewBox="0 0 20 20" v-html="small.timeCfg" /></button></div>
        </div>
        <div class="navs"><button v-for="s in ['zoom', 'zoomAll', 'extents', 'extentsAll', 'zoomRegion', 'pan', 'orbit', 'maximize']" :key="s" :class="['si', { fly: ['extents', 'extentsAll', 'pan', 'orbit'].includes(s) }]" :aria-label="s"><svg viewBox="0 0 20 20" v-html="small[s]" /></button></div>
      </footer>
    </div>
  </div>
</template>

<style>
html, body { margin: 0; background: #14242c; }
</style>

<style scoped>
* { box-sizing: border-box; }
.window { display: flex; flex-direction: column; min-height: 100vh; padding: 0 8px 8px; font: 12px/16px "Noto Sans", "Noto Sans CJK SC", sans-serif; color: #d0d0d0; background: linear-gradient(#b3d2f3 0, #a5caf1 30px, #c3daf4 100px, #b9d6f7 240px, #8db2dd 250px, #b4d5fa 340px, #b4d5fa 700px, #7bacde 100%); border-radius: 7px; box-shadow: inset 0 0 0 1px #0e2530, inset 0 0 0 2px #e2f0ff; }
.defs { position: absolute; width: 0; height: 0; }
button, input, select { font: inherit; color: inherit; margin: 0; padding: 0; border: 0; background: none; border-radius: 0; min-width: 0; }
button { display: flex; align-items: center; justify-content: center; white-space: nowrap; }
svg { display: block; }
i { display: block; }
.tri { width: 0; border: 3px solid transparent; border-top-color: #333; border-bottom: 0; }
.tri-right { width: 0; border: 5px solid transparent; border-left-color: #333; border-right: 0; }

.titlebar { display: flex; height: 32px; }
.app-btn { width: 41px; height: 41px; margin-top: 8px; border: 1px solid #111; background: linear-gradient(#d8d8d8, #8e8e8e); z-index: 2; flex: none; }
.quickbar, .info { display: flex; align-items: center; height: 24px; margin-top: 8px; border: 1px solid #666; border-bottom: 0; background: linear-gradient(#a2a2a2, #858585); flex: none; }
.quickbar { width: 321px; padding-left: 4px; }
.quickbar button { width: 24px; flex: none; }
.quickbar button svg, .info button svg { width: 20px; height: 20px; flex: none; }
.quickbar > .tri { margin: 0 3px; }
.workspace { position: relative; flex: 1; height: 22px; border: 1px solid #333; background: linear-gradient(#f2f2f2, #bdbdbd); }
.workspace select { width: 100%; height: 20px; padding-left: 4px; appearance: none; color: #000; }
.workspace::after { content: ""; position: absolute; right: 4px; top: 8px; border: 3px solid transparent; border-top-color: #333; border-bottom: 0; pointer-events: none; }
.quickbar .more { width: 14px; height: 22px; }
.quickbar .more svg { width: 14px; height: 14px; }
.title { flex: 1; display: flex; justify-content: center; gap: 28px; margin: 0; font-size: 12px; font-weight: 400; line-height: 31px; color: #111; white-space: nowrap; text-shadow: 0 0 8px #fff; min-width: 0; }
.info { width: 458px; }
.info button { width: 24px; }
.info .collapse { width: 14px; }
.info .search { width: 180px; height: 23px; padding-left: 2px; border: 1px solid #000; background: #fff; font-style: italic; color: #666; }
.search::placeholder { color: #666; opacity: 1; }
.account { color: #111; flex: 1; }
.info > .tri { margin: 0 6px 0 4px; }
.info-sep { width: 1px; height: 18px; background: #aaa; margin: 0 5px; }
.winbtns { display: flex; width: 103px; height: 20px; margin: 0 0 0 20px; border: 1px solid #45566b; border-top: 0; border-radius: 0 0 5px 5px; overflow: hidden; flex: none; }
.winbtns button { flex: 28; background: linear-gradient(#e4edf7, #c6d5e6 50%, #a5bad2 50%, #c4d7ec); border-right: 1px solid #56687e; }
.winbtns .close { flex: 46; background: linear-gradient(#e3a596, #cf6149 50%, #b52f16 50%, #d8694c); border: 0; }
.winbtns svg { width: 13px; height: 13px; }

.client { flex: 1; display: flex; flex-direction: column; background: #444; }
.menubar { display: flex; gap: 24px; height: 21px; padding-left: 57px; background: linear-gradient(#8b8b8b, #4d4d4d); border-top: 1px solid #222; color: #f2f2f2; }
.toolbar { display: flex; height: 39px; border-top: 1px solid #1a1a1a; border-bottom: 2px solid #161616; border-right: 1px solid #111; }
.grip { width: 4px; margin: 2px 0 2px 2px; border: solid #1b1b1b; border-width: 0 1px; flex: none; }
.toolbar .grip { margin-right: 2px; }
.tool { position: relative; width: 32px; height: 32px; margin-top: 2px; flex: none; }
.tool svg { width: 32px; height: 32px; flex: none; }
.tool.active { background: #3b82dc; border: 1px solid #101010; }
.fly { position: relative; }
.fly::after { content: ""; position: absolute; right: 0; bottom: 1px; border: solid transparent; border-width: 4px 0 0 4px; border-bottom: 4px solid #fff; border-top: 0; }
.sep { width: 2px; height: 16px; margin: 10px 2px; background: #1c1c1c; flex: none; }
.drop { position: relative; display: block; flex: none; border: 2px solid #1a1a1a; border-right: 1px solid #333; border-bottom: 1px solid #333; background: linear-gradient(#f3f3f3, #c5c5c5); color: #000; }
.drop select { display: block; width: 100%; height: 100%; padding-left: 2px; appearance: none; }
.drop::after { content: ""; position: absolute; right: 4px; top: 50%; margin-top: -2px; border: 4px solid transparent; border-top: 4px solid #000; border-bottom: 0; pointer-events: none; }
.toolbar .drop { width: 70px; height: 20px; margin-top: 4px; }
.toolbar .drop.combo { width: 120px; border-bottom: 2px solid #fff; border-right: 2px solid #fff; background: linear-gradient(90deg, #555 0 104px, #fff 104px); color: #1c1c1c; }

.ribbon { display: flex; height: 40px; border-bottom: 1px solid #1b1b1b; background: #444; }
.ribbon-body { flex: 1; display: flex; flex-direction: column; margin-left: 4px; background: #535353; }
.ribbon-tabs { display: flex; align-items: center; height: 21px; padding: 2px 0 0 5px; color: #a5a5a5; border-bottom: 1px solid #333; }
.ribbon-tabs button { height: 18px; margin-right: 52px; }
.ribbon-tabs .on { width: 57px; padding-left: 16px; margin-right: 27px; background: linear-gradient(#7a7a7a, #555); border: solid #333; border-width: 1px 1px 0; color: #eee; }
.ribbon-tabs .mini { width: 14px; height: 8px; margin: 0 6px 0 -20px; border-radius: 2px; background: #eee; }
.pale { border-top-color: #999; }
.ribbon-panel { height: 18px; background: linear-gradient(#474747, #353535); }
.ribbon-panel button { height: 18px; padding: 0 4px; margin-left: 1px; background: #444; border: 1px solid #555; border-top: 0; color: #e2e2e2; }

.work { flex: 1; display: grid; grid-template-columns: 40px minmax(0, 1fr) 184px; }
.side { padding-top: 5px; border-right: 2px solid #1a1a1a; border-bottom: 1px solid #111; }
.side-group { border-top: 1px solid #111; margin-left: 6px; padding: 3px 4px 4px 0; }
.side-group:first-child { margin-left: 3px; padding-left: 3px; }
.side-group button { width: 26px; height: 31px; }
.side-group svg { width: 32px; height: 31px; flex: none; }
.center { display: flex; flex-direction: column; min-width: 0; }
.views { flex: 1; display: grid; grid-template-columns: 1fr 1fr; grid-template-rows: 1fr 1fr; gap: 4px; padding-top: 1px; }
.view { position: relative; min-width: 0; min-height: 306px; border: 2px solid #353535; background: #383838; overflow: hidden; }
.view.current { border-color: #80692b; }
.view > svg { position: absolute; inset: 0; width: 100%; height: 100%; shape-rendering: crispEdges; font-family: "Noto Sans CJK SC", sans-serif; }
.vlabel { position: absolute; left: 4px; top: 4px; display: flex; gap: 6px; color: #cfcfcf; }
.lit { stroke: #616161; } .dim { stroke: #4a4a4a; } .axis { stroke: #000; } .floor { stroke: #5b5b5b; }
.cone-line { fill: none; stroke: #9fd8ee; }
.ax { font: 13px "Noto Sans", sans-serif; }
.compass { font-size: 11px; text-anchor: middle; fill: #b0b0b0; }
.slider-row { display: flex; height: 18px; margin-bottom: 1px; color: #ccc; }
.slider-row button { width: 17px; padding-top: 3px; border: solid #111; border-width: 0 2px 1px 0; }
.slider-row .thumb { width: 124px; border-bottom-width: 2px; background: #464646; margin-right: 1px; }
.track { display: flex; height: 26px; }
.track-btn { width: 50px; padding-right: 8px; border-top: 1px solid #111; }
.track-btn svg { flex: none; }
.ruler { position: relative; flex: 1; background: #2b2b2b; border-top: 1px solid #0c0c0c; margin-right: 50px; }
.ruler svg { position: relative; overflow: visible; font: 12px "Noto Sans", sans-serif; fill: #bbb; }
.marker { position: absolute; left: 1px; top: 1px; width: 8px; height: 23px; background: #857812; }

.panel { display: flex; flex-direction: column; padding: 3px 5px 0 3px; border-bottom: 1px solid #111; }
.tabs { display: flex; height: 25px; border-bottom: 1px solid #111; }
.tabs button { width: 29px; border: solid #111; border-width: 2px 1px 0; border-radius: 4px 4px 0 0; background: #3d3d3d; }
.tabs .on { height: 25px; background: #464646; }
.tabs svg { width: 22px; height: 22px; flex: none; }
.name-row { display: flex; gap: 4px; margin: 5px 1px 5px 8px; height: 20px; }
.field { height: 18px; padding: 0 2px; border: solid; border-width: 2px 1px 1px 2px; border-color: #1a1a1a #333 #333 #1a1a1a; background: #575757; color: #dedede; font-size: 11px; width: 50px; outline: 0; }
.name-row .field { width: auto; flex: 1; height: 20px; }
.swatch { width: 17px; background: #5b7bd0; border: 1px solid #222; }
.modlist { height: 23px; margin: 1px 4px 4px 8px; background: linear-gradient(90deg, #555 0 144px, #fff 144px); color: #ddd; }
.stack { list-style: none; height: 127px; margin: 1px 6px 0 8px; padding: 0; border: 2px solid #e8e8e8; background: #575757; }
.stack li { padding-left: 22px; border-bottom: 1px solid #888; background: #444; line-height: 16px; }
.mod-tools { display: flex; align-items: center; gap: 3px; height: 39px; padding: 0 8px 8px 8px; border-bottom: 2px solid #111; }
.mod-tools button { width: 24px; height: 24px; }
.mod-tools svg { width: 18px; height: 18px; flex: none; }
.mod-tools .showEnd { border: 1px solid #1c1c1c; margin: 0 9px; }
.mod-tools .config { margin-left: 8px; }
.rollout-wrap { flex: 1; display: flex; min-height: 0; margin: 8px 2px 0 3px; border-top: 1px solid #111; }
.rollout { flex: 1; min-width: 0; padding: 4px 1px 0 4px; }
.roll-head { position: relative; width: 159px; height: 17px; border: 1px solid #6a6a6a; background: #3f3f3f; color: #e6e6e6; z-index: 1; }
.roll-head span { position: absolute; left: 4px; }
.roll-body { height: 388px; margin: -9px 0 0 -4px; padding: 14px 4px 0; border: solid #161616; border-width: 0 1px; overflow: hidden; width: 165px; }
.scroll { width: 5px; background: linear-gradient(#0c0c0c 0 163px, #c6c6c6 163px); }
.param { display: flex; align-items: center; justify-content: flex-end; height: 23px; margin-right: 8px; }
.param label { margin-right: 1px; }
.param span { width: 17px; font-size: 11px; }
.fov { width: 21px; height: 20px; border: solid #1a1a1a; border-width: 0 1px 1px 0; margin-right: 6px; }
.fov svg { width: 18px; height: 18px; }
.spin { position: relative; width: 12px; height: 17px; margin-left: 3px; border: solid #1c1c1c; border-width: 0 1px 1px 0; flex: none; }
.spin::before, .spin::after { content: ""; position: absolute; left: 3px; top: 3px; border: 3px solid transparent; border-top: 0; border-bottom: 4px solid #ccc; }
.spin::after { top: 10px; border-bottom: 0; border-top: 4px solid #ccc; }
.check { display: flex; align-items: center; gap: 5px; height: 20px; padding-left: 11px; }
.check.ortho { height: 22px; }
.check.tight { height: 18px; }
.check input { appearance: none; width: 13px; height: 13px; border: solid; border-width: 2px 1px 1px 2px; border-color: #151515 #2c2c2c #2c2c2c #151515; background: #585858; }
fieldset { min-width: 0; margin: 0 2px; padding: 0; border: 1px solid #161616; }
legend { margin-left: 6px; padding: 0 2px; line-height: 16px; }
.stock { height: 99px; margin-top: 3px; }
.lens-grid { display: grid; grid-template-columns: repeat(3, 41px); gap: 6px; padding: 3px 0 0 4px; }
.lens-grid button { height: 20px; border: solid #171717; border-width: 0 1px 1px 0; font-size: 11px; }
.type-row { display: flex; align-items: center; gap: 5px; height: 34px; padding-left: 9px; }
.type-row .drop { width: 104px; height: 20px; }
.env { height: 87px; margin-top: 6px; }
.range { display: flex; align-items: center; justify-content: flex-end; height: 20px; padding-right: 9px; }
.range label { margin-right: 2px; }
.range .field { width: 54px; padding-right: 0; }
.env .check { height: 24px; }
.env .check, .clipping .check { padding-left: 8px; }
.clipping { height: 100px; margin-top: 6px; }
.clipping .check { height: 22px; }

.status { display: flex; height: 51px; padding-top: 1px; }
.listener { width: 99px; margin: 2px 5px 0 1px; flex: none; }
.macro { height: 22px; background: #dcc1c2; border: 1px solid #999; border-bottom-color: #eee; }
.listener input { width: 99px; height: 23px; margin-top: 1px; padding-left: 4px; background: #fff; color: #000; font: 12px "Liberation Mono", "Noto Sans CJK SC", monospace; }
.prompts { flex: 1; min-width: 0; padding-left: 2px; border-left: 2px solid #111; display: flex; flex-direction: column; gap: 4px; padding-top: 4px; }
.prow { display: flex; align-items: center; height: 21px; }
.sunk { height: 21px; padding-left: 5px; border: solid #151515; border-width: 1px 0 0 1px; border-right: 1px solid #333; border-bottom: 1px solid #383838; line-height: 20px; white-space: nowrap; overflow: hidden; justify-content: flex-start; }
.grow { flex: 1; }
.si { width: 22px; height: 22px; flex: none; }
.si svg { width: 18px; height: 18px; flex: none; }
.prompts .si { width: 27px; }
.coord { display: flex; align-items: center; gap: 2px; }
.coord .field { width: 57px; height: 20px; }
.prow .spin { width: 11px; margin-left: 2px; }
.cube { width: 22px; height: 21px; margin: 0 0 0 4px; background: #3b82dc; border: 1px solid #111; }
.cube svg { width: 18px; height: 18px; flex: none; }
.gridinfo { display: flex; flex-direction: column; gap: 4px; width: 100px; margin: 4px 4px 0 2px; flex: none; }
.keybtn { width: 41px; height: 43px; margin: 4px 5px 0 0; border: solid #151515; border-width: 0 1px 1px 0; flex: none; }
.keys { width: 66px; margin: 4px 5px 0 0; display: flex; flex-direction: column; gap: 1px; flex: none; }
.keys button, .kf { height: 21px; border: solid #151515; border-width: 0 1px 1px 0; }
.filters { width: 111px; margin: 3px 8px 0 0; flex: none; }
.filters .drop { height: 20px; }
.frow { display: flex; gap: 3px; margin-top: 3px; }
.kf { flex: 1; }
.playback { width: 126px; padding-top: 3px; display: flex; flex-direction: column; gap: 1px; flex: none; }
.playback .si { width: 24px; margin-right: 1px; }
.playback .si svg { width: 20px; height: 20px; }
.field.frame { width: 63px; height: 21px; margin-left: 2px; }
.playback .tcfg { width: 20px; margin-left: 5px; }
.navs { display: grid; grid-template-columns: repeat(4, 23px); grid-auto-rows: 22px; padding-top: 3px; width: 92px; margin-right: 4px; flex: none; }
</style>
